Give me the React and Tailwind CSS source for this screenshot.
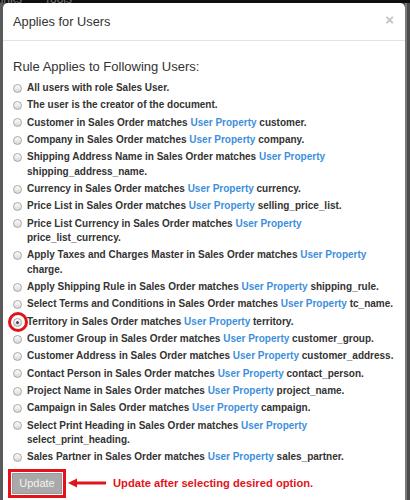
const items = [
  { text: 'All users with role Sales User.' },
  { text: 'The user is the creator of the document.' },
  { pre: 'Customer in Sales Order matches', post: 'customer.' },
  { pre: 'Company in Sales Order matches', post: 'company.' },
  { pre: 'Shipping Address Name in Sales Order matches', post: 'shipping_address_name.', wrap: true },
  { pre: 'Currency in Sales Order matches', post: 'currency.' },
  { pre: 'Price List in Sales Order matches', post: 'selling_price_list.' },
  { pre: 'Price List Currency in Sales Order matches', post: 'price_list_currency.', wrap: true },
  { pre: 'Apply Taxes and Charges Master in Sales Order matches', post: 'charge.', wrap: true },
  { pre: 'Apply Shipping Rule in Sales Order matches', post: 'shipping_rule.' },
  { pre: 'Select Terms and Conditions in Sales Order matches', post: 'tc_name.' },
  { pre: 'Territory in Sales Order matches', post: 'territory.', checked: true },
  { pre: 'Customer Group in Sales Order matches', post: 'customer_group.' },
  { pre: 'Customer Address in Sales Order matches', post: 'customer_address.' },
  { pre: 'Contact Person in Sales Order matches', post: 'contact_person.' },
  { pre: 'Project Name in Sales Order matches', post: 'project_name.' },
  { pre: 'Campaign in Sales Order matches', post: 'campaign.' },
  { pre: 'Select Print Heading in Sales Order matches', post: 'select_print_heading.', wrap: true },
  { pre: 'Sales Partner in Sales Order matches', post: 'sales_partner.' },
];

function Radio({ checked }) {
  return (
    <span className="relative mt-[2.75px] flex h-[9px] w-[9px] shrink-0 items-center justify-center rounded-full border border-[#a7a7a7] bg-gradient-to-b from-[#fdfdfd] to-[#d9d9d9]">
      {checked && <span className="h-[3px] w-[3px] rounded-full bg-[#444]" />}
      {/* red highlight drawn on the screenshot */}
      {checked && (
        <span className="absolute left-[-6.5px] top-[-6.5px] h-[20px] w-[20px] rounded-full border-[3px] border-[#e3131b]" />
      )}
    </span>
  );
}

function Option({ item, first }) {
  return (
    <div className={`flex gap-[5px] whitespace-nowrap ${first ? '' : 'mt-[2.8px]'}`}>
      <Radio checked={item.checked} />
      <div className="text-[10px] font-bold leading-[14.5px] text-[#333]">
        {item.text ? (
          item.text
        ) : (
          <>
            {item.pre} <span className="text-[#3d8fdc]">User Property</span>
            {item.wrap ? <br /> : ' '}
            {item.post}
          </>
        )}
      </div>
    </div>
  );
}

export default function App() {
  return (
    <div className="flex h-[500px] w-[410px] flex-col overflow-hidden bg-[#545454] font-['Liberation_Sans',Arial,sans-serif]">
      {/* page behind the dialog */}
      <div className="h-[3px] shrink-0 overflow-hidden bg-[#0f0f0f]">
        <div className="-mt-[10px] flex gap-[22px] text-[12px] text-[#777]">
          <span className="-ml-[6px]">Links</span>
          <span>Tools</span>
        </div>
      </div>
      <div className="flex min-h-0 flex-1">
        <div className="w-[3px] shrink-0 bg-[#5a5a5a]" />
        <div className="w-[402px] shrink-0 rounded-t-[5px] bg-white">
          {/* header */}
          <div className="flex h-[38px] items-center justify-between border-b border-[#e3e3e3] pl-[10px] pr-[11px] pt-[1px]">
            <h4 className="text-[12.8px] text-[#333]">Applies for Users</h4>
            <span className="-mt-[5px] text-[15px] font-bold leading-none text-[#c4c4c4]">×</span>
          </div>
          {/* body */}
          <div className="pl-[10px] pt-[17px]">
            <p className="text-[13px] leading-[18px] text-[#333]">Rule Applies to Following Users:</p>
            <div className="mt-[5px]">
              {items.map((it, i) => (
                <Option key={i} item={it} first={i === 0} />
              ))}
            </div>
            <div className="mt-[4px] flex items-center">
              <div className="-ml-[5px] border-[3px] border-[#e3131b] p-[1px]">
                <button className="flex h-[21px] w-[50px] items-center justify-center border border-[#9a9a9a] bg-[#a9a9a9] text-[11px] text-[#f2f2f2]">
                  Update
                </button>
              </div>
              <svg width="38" height="10" viewBox="0 0 38 10" className="ml-[2px]">
                <path d="M0 5 L9 0.5 L9 9.5 Z" fill="#e3131b" />
                <rect x="8" y="3.5" width="30" height="3" fill="#e3131b" />
              </svg>
              <span className="ml-[7px] text-[11.2px] font-bold text-[#e3131b]">
                Update after selecting desired option.
              </span>
            </div>
          </div>
        </div>
        <div className="w-[2px] shrink-0 bg-[#7a7a7a]" />
        <div className="flex-1 bg-[#4c4c4c]" />
      </div>
    </div>
  );
}
